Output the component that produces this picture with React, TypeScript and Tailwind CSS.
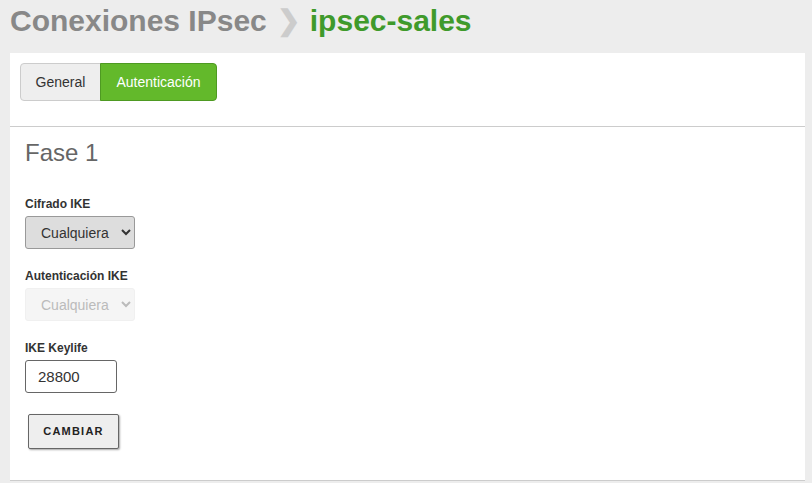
import { useState } from "react";

const FONT = { fontFamily: '"Liberation Sans", Arial, sans-serif' };

function Tabs() {
  const [active, setActive] = useState("auth");
  const base = "h-[38px] text-[14px] border";
  return (
    <div className="flex">
      <button
        onClick={() => setActive("general")}
        className={`${base} w-[81px] rounded-l-[4px] ${
          active === "general"
            ? "bg-[#63b92b] border-[#4e9a22] text-white"
            : "bg-[#eeeeee] border-[#cccccc] text-[#333]"
        }`}
      >
        General
      </button>
      <button
        onClick={() => setActive("auth")}
        className={`${base} w-[117px] -ml-px rounded-r-[4px] ${
          active === "auth"
            ? "bg-[#63b92b] border-[#4e9a22] text-white"
            : "bg-[#eeeeee] border-[#cccccc] text-[#333]"
        }`}
      >
        Autenticación
      </button>
    </div>
  );
}

function Field({ label, children }: { label: string; children: React.ReactNode }) {
  return (
    <div className="flex flex-col">
      <label className="text-[12px] font-bold text-[#333] leading-[14px] mb-[5px]">{label}</label>
      {children}
    </div>
  );
}

export default function App() {
  const [keylife, setKeylife] = useState("28800");
  return (
    <div className="w-[812px] h-[483px] bg-[#ededed] overflow-hidden" style={FONT}>
      <h1 className="h-[53px] pl-[10px] pt-[1px] text-[30px] font-bold leading-[38px] flex items-center gap-[10px] pb-[13px]">
        <span className="text-[#888888]">Conexiones IPsec</span>
        <span className="text-[#cccccc] text-[28px]">❯</span>
        <span className="text-[#3f9a2b]">ipsec-sales</span>
      </h1>
      <div className="ml-[10px] w-[795px] bg-white">
        <div className="px-[10px] pt-[10px] h-[74px] border-b border-[#cccccc]">
          <Tabs />
        </div>
        <div className="px-[15px] pt-[13px] h-[354px] border-b border-[#cccccc]">
          <h2 className="text-[24px] leading-[26px] text-[#666] mb-[31px]">Fase 1</h2>
          <div className="flex flex-col gap-[20px]">
            <Field label="Cifrado IKE">
              <select className="w-[110px] h-[33px] bg-[#dddddd] border border-[#999] rounded-[3px] text-[14px] text-[#333] pl-[11px]">
                <option>Cualquiera</option>
              </select>
            </Field>
            <Field label="Autenticación IKE">
              <select
                disabled
                className="w-[110px] h-[33px] bg-[#f5f5f5] border border-[#f0f0f0] rounded-[3px] text-[14px] text-[#bbbbbb] pl-[11px]"
              >
                <option>Cualquiera</option>
              </select>
            </Field>
            <Field label="IKE Keylife">
              <input
                value={keylife}
                onChange={(e) => setKeylife(e.target.value)}
                className="w-[92px] h-[33px] border border-[#666] rounded-[3px] text-[15px] text-[#333] px-[12px]"
              />
            </Field>
          </div>
          <button className="mt-[21px] ml-[3px] w-[91px] h-[35px] bg-[#eeeeee] border border-[#666] rounded-[2px] shadow-[1px_1px_2px_rgba(0,0,0,0.35)] text-[11px] font-bold tracking-[1.2px] text-[#222]">
            CAMBIAR
          </button>
        </div>
      </div>
    </div>
  );
}
